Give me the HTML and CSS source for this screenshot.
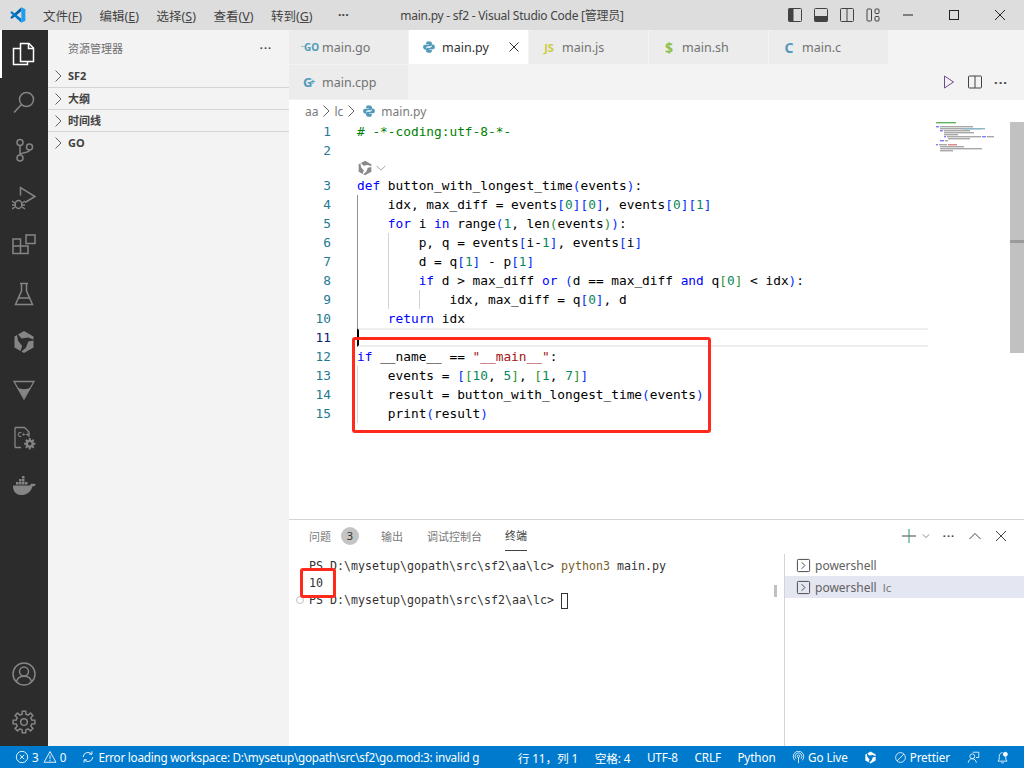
FILE: index.html
```html
<!DOCTYPE html>
<html lang="zh-CN">
<head>
    <meta charset="UTF-8">
    <meta name="viewport" content="width=device-width, initial-scale=1.0">
    <title>main.py - sf2 - Visual Studio Code</title>
    <link rel="stylesheet" href="styles.css">
</head>
<body>
    <svg class="defs" aria-hidden="true">
        <symbol id="py" viewBox="0 0 16 16">
            <path id="py-half" d="M8 1.3c-3 0-3.2 1-3.2 2.2v1.3H8v.6H3.5C2.2 5.4 1.3 6.4 1.3 8.1s.9 2.9 2.2 2.9h1.2V9.3c0-1.2 1-2.2 2.2-2.2h2.9c1 0 1.5-.8 1.5-1.8V3.5c0-1.2-1-2.2-4.3-2.2z"/>
            <use href="#py-half" transform="rotate(180 8 8)"/>
        </symbol>
        <symbol id="knot" viewBox="0 0 24 24">
            <path id="blade" d="M6 4.500L12 1 21.500 6.500V9.500L16 7.500 9.500 8.500z"/>
            <use href="#blade" transform="rotate(120 12 12)"/>
            <use href="#blade" transform="rotate(240 12 12)"/>
        </symbol>
        <symbol id="gear" viewBox="-12 -12 24 24">
            <polygon points="10.86,1.72 7.76,1.94 6.86,4.12 8.9,6.47 6.47,8.9 4.12,6.86 1.94,7.76 1.72,10.86 -1.72,10.86 -1.94,7.76 -4.12,6.86 -6.47,8.9 -8.9,6.47 -6.86,4.12 -7.76,1.94 -10.86,1.72 -10.86,-1.72 -7.76,-1.94 -6.86,-4.12 -8.9,-6.47 -6.47,-8.9 -4.12,-6.86 -1.94,-7.76 -1.72,-10.86 1.72,-10.86 1.94,-7.76 4.12,-6.86 6.47,-8.9 8.9,-6.47 6.86,-4.12 7.76,-1.94 10.86,-1.72"/>
        </symbol>
    </svg>

    <header class="titlebar">
        <div class="title-left">
            <svg class="logo" viewBox="0 0 100 100">
                <polygon fill="#0065a9" points="71,2 71,27 12,74 4,70 4,63"/>
                <polygon fill="#007acc" points="4,37 4,30 12,26 71,73 71,98"/>
                <polygon fill="#1f9cf0" points="71,2 96,14 96,86 71,98"/>
            </svg>
            <nav class="menu">
                <span>文件(<u>F</u>)</span>
                <span>编辑(<u>E</u>)</span>
                <span>选择(<u>S</u>)</span>
                <span>查看(<u>V</u>)</span>
                <span>转到(<u>G</u>)</span>
                <span class="menu-more">···</span>
            </nav>
        </div>
        <div class="title-text">main.py - sf2 - Visual Studio Code [管理员]</div>
        <div class="title-right">
            <div class="layout-btns">
                <svg viewBox="0 0 16 16"><rect x="1.500" y="1.500" width="13" height="13" rx="1" class="ln"/><rect x="1.500" y="1.500" width="5" height="13" class="fl"/></svg>
                <svg viewBox="0 0 16 16"><rect x="1.500" y="1.500" width="13" height="13" rx="1" class="ln"/><rect x="1.500" y="9" width="13" height="5.500" class="fl"/></svg>
                <svg viewBox="0 0 16 16"><rect x="1.500" y="1.500" width="13" height="13" rx="1" class="ln"/><path d="M8 1.500v13" class="ln"/></svg>
                <svg viewBox="0 0 16 16"><rect x="2" y="2" width="4.500" height="12" rx="1" class="ln"/><rect x="10" y="2" width="4" height="4.500" rx="1" class="ln"/><rect x="10" y="9.500" width="4" height="4.500" rx="1" class="ln"/></svg>
            </div>
            <div class="win-btn"><svg viewBox="0 0 10 10"><path d="M0 5h10" class="ln"/></svg></div>
            <div class="win-btn"><svg viewBox="0 0 10 10"><rect x=".5" y=".5" width="9" height="9" class="ln"/></svg></div>
            <div class="win-btn"><svg viewBox="0 0 10 10"><path d="M0 0l10 10M10 0L0 10" class="ln"/></svg></div>
        </div>
    </header>

    <div class="workbench">
        <aside class="activitybar">
            <div class="act active">
                <svg viewBox="0 0 24 24" class="st"><path d="M8.500 1.500h8.500l4.500 4.500v13.500h-13z"/><path d="M16.500 1.500v5h5"/><path d="M8.500 6.500H1.500v16h14v-3"/></svg>
            </div>
            <div class="act">
                <svg viewBox="0 0 24 24" class="st"><circle cx="14.500" cy="9.500" r="7"/><path d="M9.500 14.500L2 22.500"/></svg>
            </div>
            <div class="act">
                <svg viewBox="0 0 24 24" class="st"><circle cx="8" cy="4.500" r="3"/><circle cx="17.500" cy="9" r="3"/><circle cx="8" cy="20" r="3"/><path d="M8 7.500V17M17.500 12c0 3.500-9.500 2-9.500 5"/></svg>
            </div>
            <div class="act">
                <svg viewBox="0 0 24 24" class="st"><path d="M8.500 9.500V1.500L23 10.500 13 16.500"/><ellipse cx="6.500" cy="18.500" rx="3.300" ry="4"/><path d="M0 15l3 2M0 19h3M0 23l3-2M13 15l-3 2M13 19h-3M13 23l-3-2"/></svg>
            </div>
            <div class="act">
                <svg viewBox="0 0 24 24" class="st"><path d="M1 5h7.500v7h7.500v7.500H1zM1 12h7.500v7.500"/><rect x="14" y="1" width="9" height="8.500"/></svg>
            </div>
            <div class="act">
                <svg viewBox="0 0 24 24" class="st"><path d="M8 1.500h8M9.500 1.500v7.500L3.500 22.500h17L14.500 9V1.500M6.500 16h11"/></svg>
            </div>
            <div class="act">
                <svg viewBox="0 0 24 24" class="sym"><use href="#knot"/></svg>
            </div>
            <div class="act">
                <svg viewBox="0 0 24 24"><path d="M2 3.500h20L12 21z" class="st-thin"/><path d="M5.500 10c4 1.500 9 1.500 13 0L12 20z" class="fl-gray"/></svg>
            </div>
            <div class="act">
                <svg viewBox="0 0 24 24"><path d="M3 1.500h9.500l4.500 4.500v5M9 21.500H3z" class="st-thin"/><path d="M3 1.500v20" class="st-thin"/><text x="5.500" y="11" class="cpp">C++</text><use href="#gear" x="11.500" y="11.500" width="12.500" height="12.500" class="fl-gray"/><circle cx="17.750" cy="17.750" r="1.800" class="hole"/></svg>
            </div>
            <div class="act">
                <svg viewBox="0 0 24 24" class="sym"><path d="M1 11.500h17c.500-1.500 2-2.500 2.500-1.500.800-.600 2.500-.300 3.500.500-.800 1.500-2.300 1.800-3.500 1.700C19 18 15 21 9 21 3.500 21 .8 16.500 1 11.500z"/><path d="M4 8h2.500v2.500H4zM7 8h2.500v2.500H7zM10 8h2.500v2.500H10zM13 8h2.500v2.500H13zM7 5h2.500v2.500H7zM10 5h2.500v2.500H10zM10 2h2.500v2.500H10z"/></svg>
            </div>
            <div class="act-spacer"></div>
            <div class="act">
                <svg viewBox="0 0 24 24" class="st"><circle cx="12" cy="12" r="11"/><circle cx="12" cy="9.500" r="4.500"/><path d="M4.500 20c.500-3.500 3.500-5.800 7.500-5.800s7 2.300 7.500 5.800"/></svg>
            </div>
            <div class="act">
                <svg viewBox="-12 -12 24 24" class="st"><use href="#gear" x="-12" y="-12" width="24" height="24"/><circle r="3.300"/></svg>
            </div>
        </aside>

        <aside class="sidebar">
            <div class="side-head"><span>资源管理器</span><span class="dots">···</span></div>
            <div class="side-sec"><svg viewBox="0 0 16 16" class="chev"><path d="M5.500 2.500L11 8l-5.500 5.500"/></svg>SF2</div>
            <div class="side-sec line"><svg viewBox="0 0 16 16" class="chev"><path d="M5.500 2.500L11 8l-5.500 5.500"/></svg>大纲</div>
            <div class="side-sec line"><svg viewBox="0 0 16 16" class="chev"><path d="M5.500 2.500L11 8l-5.500 5.500"/></svg>时间线</div>
            <div class="side-sec line"><svg viewBox="0 0 16 16" class="chev"><path d="M5.500 2.500L11 8l-5.500 5.500"/></svg>GO</div>
        </aside>

        <main class="main">
            <div class="tabs">
                <div class="tab"><span class="fi go">GO</span>main.go</div>
                <div class="tab on"><span class="fi"><svg class="py"><use href="#py"/></svg></span>main.py<svg viewBox="0 0 16 16" class="tab-x"><path d="M3.500 3.500l9 9M12.500 3.500l-9 9"/></svg></div>
                <div class="tab"><span class="fi js">JS</span>main.js</div>
                <div class="tab"><span class="fi sh">$</span>main.sh</div>
                <div class="tab"><span class="fi cc">C</span>main.c</div>
            </div>
            <div class="tabs second">
                <div class="tab"><span class="fi cc cpp-ic">G<sup>+</sup></span>main.cpp</div>
                <div class="tab-actions">
                    <svg viewBox="0 0 16 16"><path d="M3.500 2L12.500 8l-9 6z" class="run"/></svg>
                    <svg viewBox="0 0 16 16"><rect x="1.500" y="2" width="13" height="12" rx="1" class="ln"/><path d="M8 2v12" class="ln"/></svg>
                    <span class="dots">···</span>
                </div>
            </div>
            <div class="crumbs">
                <span>aa</span><svg viewBox="0 0 16 16" class="chev"><path d="M5.500 2.500L11 8l-5.500 5.500"/></svg>
                <span>lc</span><svg viewBox="0 0 16 16" class="chev"><path d="M5.500 2.500L11 8l-5.500 5.500"/></svg>
                <svg class="py"><use href="#py"/></svg><span>main.py</span>
            </div>

            <section class="editor">
                <div class="gutter">
                    <div>1</div><div>2</div><div class="lens-gap"></div><div>3</div><div>4</div><div>5</div><div>6</div><div>7</div><div>8</div><div>9</div><div>10</div><div class="cur">11</div><div>12</div><div>13</div><div>14</div><div>15</div>
                </div>
                <div class="code">
<div class="l"><span class="c"># -*-coding:utf-8-*-</span></div>
<div class="l"></div>
<div class="lens"><svg viewBox="0 0 24 24" class="lens-ic"><use href="#knot"/></svg><svg viewBox="0 0 16 16" class="lens-ch"><path d="M3 5.500l5 5 5-5"/></svg></div>
<div class="l"><span class="k">def</span> button_with_longest_time<span class="b1">(</span>events<span class="b1">)</span>:</div>
<div class="l"><i class="g a"></i>idx, max_diff = events<span class="b1">[</span><span class="n">0</span><span class="b1">][</span><span class="n">0</span><span class="b1">]</span>, events<span class="b1">[</span><span class="n">0</span><span class="b1">][</span><span class="n">1</span><span class="b1">]</span></div>
<div class="l"><i class="g a"></i><span class="k">for</span> i <span class="k">in</span> range<span class="b1">(</span><span class="n">1</span>, len<span class="b2">(</span>events<span class="b2">)</span><span class="b1">)</span>:</div>
<div class="l"><i class="g a"></i><i class="g"></i>p, q = events<span class="b1">[</span>i-<span class="n">1</span><span class="b1">]</span>, events<span class="b1">[</span>i<span class="b1">]</span></div>
<div class="l"><i class="g a"></i><i class="g"></i>d = q<span class="b1">[</span><span class="n">1</span><span class="b1">]</span> - p<span class="b1">[</span><span class="n">1</span><span class="b1">]</span></div>
<div class="l"><i class="g a"></i><i class="g"></i><span class="k">if</span> d &gt; max_diff <span class="k">or</span> <span class="b1">(</span>d == max_diff <span class="k">and</span> q<span class="b2">[</span><span class="n">0</span><span class="b2">]</span> &lt; idx<span class="b1">)</span>:</div>
<div class="l"><i class="g a"></i><i class="g"></i><i class="g"></i>idx, max_diff = q<span class="b1">[</span><span class="n">0</span><span class="b1">]</span>, d</div>
<div class="l"><i class="g a"></i><span class="k">return</span> idx</div>
<div class="l curline"></div>
<div class="l"><span class="k">if</span> __name__ == <span class="s">"__main__"</span>:</div>
<div class="l"><i class="g"></i>events = <span class="b1">[</span><span class="b2">[</span><span class="n">10</span>, <span class="n">5</span><span class="b2">]</span>, <span class="b2">[</span><span class="n">1</span>, <span class="n">7</span><span class="b2">]</span><span class="b1">]</span></div>
<div class="l"><i class="g"></i>result = button_with_longest_time<span class="b1">(</span>events<span class="b1">)</span></div>
<div class="l"><i class="g"></i>print<span class="b1">(</span>result<span class="b1">)</span></div>
                </div>
                <svg class="minimap" viewBox="0 0 74 34">
                    <rect x="0" y="0" width="20" height="1.400" fill="#5fb55f"/>
                    <rect x="0" y="4" width="3" height="1.400" fill="#7d7dff"/><rect x="4" y="4" width="33" height="1.400" fill="#a8a8a8"/>
                    <rect x="4" y="6" width="42" height="1.400" fill="#a8a8a8"/><rect x="27" y="6" width="22" height="1.400" fill="#8fb8c8"/>
                    <rect x="4" y="8" width="3" height="1.400" fill="#7d7dff"/><rect x="8" y="8" width="26" height="1.400" fill="#a8a8a8"/>
                    <rect x="8" y="10" width="30" height="1.400" fill="#a8a8a8"/>
                    <rect x="8" y="12" width="14" height="1.400" fill="#a8a8a8"/>
                    <rect x="8" y="14" width="2" height="1.400" fill="#7d7dff"/><rect x="11" y="14" width="34" height="1.400" fill="#a8a8a8"/><rect x="46" y="14" width="4" height="1.400" fill="#7d7dff"/><rect x="51" y="14" width="7" height="1.400" fill="#a8a8a8"/>
                    <rect x="12" y="16" width="22" height="1.400" fill="#a8a8a8"/>
                    <rect x="4" y="18" width="4" height="1.400" fill="#7d7dff"/><rect x="9" y="18" width="3" height="1.400" fill="#a8a8a8"/>
                    <rect x="0" y="22" width="2" height="1.400" fill="#7d7dff"/><rect x="3" y="22" width="8" height="1.400" fill="#a8a8a8"/><rect x="12" y="22" width="9" height="1.400" fill="#d98a8a"/>
                    <rect x="4" y="24" width="24" height="1.400" fill="#a8a8a8"/>
                    <rect x="4" y="26" width="42" height="1.400" fill="#a8a8a8"/>
                    <rect x="4" y="28" width="13" height="1.400" fill="#a8a8a8"/>
                </svg>
                <div class="vscroll"><div class="slider"></div></div>
            </section>

            <section class="panel">
                <div class="panel-tabs">
                    <span class="ptab">问题<b class="badge">3</b></span>
                    <span class="ptab">输出</span>
                    <span class="ptab">调试控制台</span>
                    <span class="ptab on">终端</span>
                    <div class="panel-actions">
                        <svg viewBox="0 0 16 16"><path d="M1 8h14" class="ln"/><path d="M8 1v14" class="plus"/></svg>
                        <svg viewBox="0 0 16 16" class="small"><path d="M3 5.500l5 5 5-5" class="ln"/></svg>
                        <span class="dots">···</span>
                        <svg viewBox="0 0 16 16"><path d="M2.500 11L8 5.500l5.500 5.500" class="ln"/></svg>
                        <svg viewBox="0 0 16 16"><path d="M3 3l10 10M13 3L3 13" class="ln"/></svg>
                    </div>
                </div>
                <div class="panel-body">
                    <div class="terminal">
                        <div class="t-line">PS D:\mysetup\gopath\src\sf2\aa\lc&gt; <span class="cmd">python3</span> main.py</div>
                        <div class="t-line">10</div>
                        <div class="t-line">PS D:\mysetup\gopath\src\sf2\aa\lc&gt; <i class="t-cursor"></i></div>
                        <i class="t-deco"></i>
                        <i class="t-mark"></i>
                    </div>
                    <div class="term-list">
                        <div class="term-row"><svg viewBox="0 0 16 16"><rect x="1.500" y="1.500" width="13" height="13" rx="1" class="ln"/><path d="M6 4.500L9.500 8 6 11.500" class="ln"/></svg>powershell</div>
                        <div class="term-row on"><svg viewBox="0 0 16 16"><rect x="1.500" y="1.500" width="13" height="13" rx="1" class="ln"/><path d="M6 4.500L9.500 8 6 11.500" class="ln"/></svg>powershell<span class="term-sub">lc</span></div>
                    </div>
                </div>
            </section>
        </main>
    </div>

    <footer class="statusbar">
        <div class="st-left">
            <span class="si">
                <svg viewBox="0 0 16 16"><circle cx="8" cy="8" r="6.500"/><path d="M5.500 5.500l5 5M10.500 5.500l-5 5"/></svg>3
                <svg viewBox="0 0 16 16" class="warn"><path d="M8 1.800L14.800 14H1.200zM8 6v4.500M8 11.500v1.500"/></svg>0
            </span>
            <span class="si msg">
                <svg viewBox="0 0 16 16"><path d="M2.500 8a5.500 5.500 0 0 1 9.500-3.500M13.500 8A5.500 5.500 0 0 1 4 11.500M12.500 1.500v3.300H9.200M3.500 14.500v-3.300h3.300"/></svg>Error loading workspace: D:\mysetup\gopath\src\sf2\go.mod:3: invalid g
            </span>
        </div>
        <div class="st-right">
            <span class="si">行 11，列 1</span>
            <span class="si">空格: 4</span>
            <span class="si">UTF-8</span>
            <span class="si">CRLF</span>
            <span class="si">Python</span>
            <span class="si"><svg viewBox="0 0 16 16"><circle cx="8" cy="6.500" r="1.500"/><path d="M5 9.500a4.200 4.200 0 1 1 6 0M3.500 11.500a6.500 6.500 0 1 1 9 0M8 8v7"/></svg>Go Live</span>
            <span class="si"><svg viewBox="0 0 24 24" class="fillw"><use href="#knot"/></svg></span>
            <span class="si"><svg viewBox="0 0 16 16"><circle cx="8" cy="8" r="6"/><path d="M3.800 12.200l8.400-8.400"/></svg>Prettier</span>
            <span class="si"><svg viewBox="0 0 16 16"><circle cx="6.500" cy="6.500" r="3"/><path d="M1.500 14.500c.3-3 2.300-5 5-5s4.700 2 5 5M7 1.500h7.500v6.500H11"/></svg></span>
            <span class="si"><svg viewBox="0 0 16 16"><path d="M8 2C5.500 2 4 4 4 6.500V10l-1.500 2.500h11L12 10V6.500M6.500 14.500h3"/><circle cx="11.500" cy="4" r="2.500" class="dot"/></svg></span>
        </div>
    </footer>

    <!-- red annotation boxes on top of the screenshot -->
    <div class="mark mark-code"></div>
    <div class="mark mark-term"></div>
</body>
</html>
```
FILE: styles.css
```css
* {
    box-sizing: border-box;
}
html, body {
    height: 100%;
}
body {
    margin: 0;
    height: 768px;
    width: 1024px;
    overflow: hidden;
    position: relative;
    display: flex;
    flex-direction: column;
    font-family: "Noto Sans", "Noto Sans CJK SC", sans-serif;
    font-size: 13px;
    color: #333;
    background: #fff;
}
svg {
    display: block;
    flex: none;
}
.defs {
    position: absolute;
    width: 0;
    height: 0;
}
.ln {
    fill: none;
    stroke: #424242;
    stroke-width: 1;
}
.fl {
    fill: #424242;
}
.dots {
    width: 16px;
    text-align: center;
    letter-spacing: 1px;
    font-weight: 700;
    color: #424242;
}

/* title bar */
.titlebar {
    height: 30px;
    flex: none;
    background: #ddd;
    display: grid;
    grid-template-columns: 1fr auto 1fr;
    align-items: center;
    font-size: 12px;
}
.title-left {
    display: flex;
    align-items: center;
}
.logo {
    width: 16px;
    height: 16px;
    margin-left: 10px;
}
.menu {
    display: flex;
    gap: 17.5px;
    margin-left: 17px;
    font-size: 12.5px;
    color: #444;
}
.menu u {
    text-underline-offset: 1px;
}
.menu-more {
    margin-left: 8px;
    font-weight: 700;
}
.title-text {
    color: #444;
    letter-spacing: -0.25px;
}
.title-right {
    display: flex;
    justify-content: flex-end;
    align-items: center;
    height: 30px;
    padding-right: 1px;
}
.layout-btns {
    display: flex;
    gap: 10px;
    margin-right: 4px;
}
.layout-btns svg {
    width: 16px;
    height: 16px;
}
.win-btn {
    width: 46px;
    height: 30px;
    display: flex;
    align-items: center;
    justify-content: center;
}
.win-btn svg {
    width: 10px;
    height: 10px;
}
.win-btn .ln {
    stroke: #222;
}

.workbench {
    flex: 1;
    display: flex;
    min-height: 0;
}

/* activity bar */
.activitybar {
    width: 48px;
    flex: none;
    background: #2c2c2c;
    display: flex;
    flex-direction: column;
}
.act {
    height: 48px;
    flex: none;
    display: flex;
    align-items: center;
    justify-content: center;
    color: #858585;
}
.act svg {
    width: 24px;
    height: 24px;
}
.act.active {
    color: #fff;
    border-left: 2px solid #fff;
    padding-right: 2px;
}
.act-spacer {
    flex: 1;
}
.st {
    fill: none;
    stroke: currentColor;
    stroke-width: 1.5;
}
.st-thin {
    fill: none;
    stroke: #858585;
    stroke-width: 1.3;
}
.fl-gray {
    fill: #858585;
}
.hole {
    fill: #2c2c2c;
}
.sym {
    fill: #858585;
}
.cpp {
    font-size: 6.5px;
    font-weight: 700;
    fill: #858585;
}

/* side bar */
.sidebar {
    width: 241px;
    flex: none;
    background: #f3f3f3;
}
.side-head {
    height: 35px;
    padding: 0 15px 0 20px;
    display: flex;
    align-items: center;
    justify-content: space-between;
    font-size: 11px;
    color: #6f6f6f;
}
.side-sec {
    height: 22px;
    display: flex;
    align-items: center;
    padding-left: 2px;
    padding-bottom: 1px;
    font-size: 11px;
    font-weight: 700;
    color: #424242;
}
.side-sec.line {
    border-top: 1px solid #d4d4d4;
}
.chev {
    width: 16px;
    height: 16px;
    fill: none;
    stroke: #616161;
    stroke-width: 1;
}
.side-sec .chev {
    margin: 1px 2px 0 0;
}

/* tabs */
.main {
    flex: 1;
    min-width: 0;
    display: flex;
    flex-direction: column;
}
.tabs {
    height: 34px;
    flex: none;
    display: flex;
    background: #f3f3f3;
}
.tabs.second {
    height: 36px;
    padding-top: 1px;
    padding-bottom: 1px;
}
.tab {
    width: 120px;
    display: flex;
    align-items: center;
    padding-left: 12px;
    background: #ececec;
    border-right: 1px solid #f3f3f3;
    color: #727272;
    font-size: 12.5px;
}
.tab.on {
    background: #fff;
    color: #333;
}
.fi {
    width: 16px;
    height: 16px;
    margin-right: 5px;
    display: flex;
    align-items: center;
    justify-content: center;
    font-weight: 700;
    font-size: 11px;
}
.go {
    color: #519aba;
    font-size: 10px;
    white-space: nowrap;
    padding-left: 5px;
    background: linear-gradient(#9cbfcf, #9cbfcf) -1px 7px / 6px 1px no-repeat;
}
.js {
    color: #cbcb41;
}
.sh {
    color: #8dc149;
    font-size: 14px;
}
.cc {
    color: #519aba;
    font-size: 14px;
}
.cpp-ic {
    font-size: 13px;
}
.cc sup {
    font-size: 8px;
    line-height: 0;
    margin-left: -2px;
}
.py {
    width: 14px;
    height: 14px;
    fill: #519aba;
}
.tab-x {
    width: 16px;
    height: 16px;
    margin-left: auto;
    margin-right: 6px;
    fill: none;
    stroke: #333;
}
.tab-actions {
    margin-left: auto;
    display: flex;
    align-items: center;
    gap: 10px;
    padding-right: 15px;
}
.tab-actions svg {
    width: 16px;
    height: 16px;
}
.run {
    fill: none;
    stroke: #6b4b8f;
}

/* breadcrumbs */
.crumbs {
    height: 22px;
    flex: none;
    display: flex;
    align-items: center;
    padding-left: 16px;
    font-size: 12px;
    color: #7a7a7a;
}
.crumbs .py {
    margin: 0 5px 0 3px;
}

/* editor */
.editor {
    flex: 1;
    min-height: 0;
    display: flex;
    font-family: "DejaVu Sans Mono", monospace;
    font-size: 12.8px;
    color: #000;
}
.gutter {
    width: 68px;
    flex: none;
    padding-right: 26px;
    text-align: right;
    color: #237893;
}
.gutter div {
    height: 19px;
    line-height: 19px;
}
.gutter .lens-gap {
    height: 16px;
}
.gutter .cur {
    color: #0b216f;
}
.code {
    width: 571px;
    flex: none;
}
.l {
    height: 19px;
    line-height: 19px;
    white-space: pre;
}
.lens {
    height: 16px;
    display: flex;
    align-items: center;
    gap: 1px;
}
.lens-ic {
    width: 16px;
    height: 16px;
    fill: #8a8a8a;
}
.lens-ch {
    width: 14px;
    height: 14px;
    fill: none;
    stroke: #999;
}
.curline {
    border-top: 2px solid #eee;
    border-bottom: 2px solid #eee;
    border-left: 2px solid #000;
}
.g {
    display: inline-block;
    vertical-align: top;
    width: 30.82px;
    height: 19px;
    border-left: 1px solid #d3d3d3;
}
.g.a {
    border-left-color: #939393;
}
.k { color: #0000ff; }
.s { color: #a31515; }
.n { color: #098658; }
.c { color: #008000; }
.b1 { color: #0431fa; }
.b2 { color: #319331; }
.minimap {
    width: 74px;
    height: 34px;
    margin-left: 8px;
}
.vscroll {
    width: 14px;
    flex: none;
    margin-left: auto;
}
.slider {
    height: 231px;
    background: linear-gradient(#c1c1c1 118px, #9a9a9a 118px, #9a9a9a 121px, #c1c1c1 121px);
}

/* panel */
.panel {
    height: 227px;
    flex: none;
    border-top: 1px solid #d4d4d4;
    display: flex;
    flex-direction: column;
}
.panel-tabs {
    height: 34px;
    flex: none;
    display: flex;
    align-items: flex-start;
    padding-left: 20px;
    gap: 24px;
    font-size: 11px;
    color: #7a7a7a;
}
.ptab {
    display: flex;
    align-items: center;
    height: 31px;
}
.ptab.on {
    color: #424242;
    border-bottom: 1px solid #424242;
    margin-left: -1px;
}
.badge {
    width: 18px;
    height: 18px;
    margin: 0 -2px 0 10px;
    border-radius: 50%;
    background: #c4c4c4;
    color: #333;
    font-weight: 400;
    display: flex;
    align-items: center;
    justify-content: center;
}
.panel-actions {
    margin-left: auto;
    display: flex;
    align-items: center;
    gap: 10px;
    height: 31px;
    padding-right: 15px;
}
.panel-actions svg {
    width: 16px;
    height: 16px;
}
.panel-actions svg.small {
    width: 10px;
    height: 10px;
    margin-left: -6px;
}
.plus {
    stroke: #2f8f6f;
    stroke-width: 1;
    fill: none;
}
.panel-body {
    flex: 1;
    display: flex;
    min-height: 0;
}
.terminal {
    flex: 1;
    position: relative;
    padding: 4px 0 0 20px;
    font-family: "DejaVu Sans Mono", monospace;
    font-size: 11.63px;
    color: #333;
}
.t-line {
    height: 17px;
    line-height: 17px;
    white-space: pre;
    display: flex;
    align-items: center;
}
.cmd {
    color: #795e26;
}
.t-cursor {
    width: 7px;
    height: 16px;
    border: 1px solid #333;
}
.t-deco {
    position: absolute;
    left: 7px;
    top: 42px;
    width: 8px;
    height: 8px;
    border: 1px solid #c0c0c0;
    border-radius: 50%;
}
.t-mark {
    position: absolute;
    right: 7px;
    top: 31px;
    width: 3px;
    height: 12px;
    background: #c0c0c0;
}
.term-list {
    width: 240px;
    flex: none;
    border-left: 1px solid #d4d4d4;
    color: #616161;
    font-size: 12px;
}
.term-row {
    height: 22px;
    display: flex;
    align-items: center;
    gap: 4px;
    padding-left: 11px;
}
.term-row svg {
    width: 15px;
    height: 15px;
}
.term-row.on {
    background: #e4e6f1;
}
.term-sub {
    margin-left: 2px;
    font-size: 11.5px;
    color: #777;
}

/* status bar */
.statusbar {
    height: 22px;
    flex: none;
    background: #007acc;
    color: #fff;
    font-size: 11.7px;
    display: flex;
    justify-content: space-between;
    align-items: center;
    white-space: nowrap;
}
.st-left, .st-right {
    display: flex;
    align-items: center;
}
.st-left {
    padding-left: 15px;
}
.st-right {
    padding-right: 15px;
    gap: 16.5px;
    letter-spacing: -0.1px;
}
.si {
    display: flex;
    align-items: center;
    gap: 3px;
}
.si svg {
    width: 14px;
    height: 14px;
    fill: none;
    stroke: #fff;
    stroke-width: 1;
}
.st-right .si svg {
    width: 13px;
    height: 13px;
}
.si .warn {
    margin-left: 1px;
}
.si .fillw {
    fill: #fff;
    stroke: none;
}
.si .dot {
    fill: #fff;
}
.msg {
    margin-left: 15px;
    letter-spacing: -0.24px;
}

/* annotations */
.mark {
    position: absolute;
    border: 3px solid #ff2a1c;
    border-radius: 3px;
}
.mark-code {
    left: 352px;
    top: 337px;
    width: 359px;
    height: 96px;
}
.mark-term {
    left: 300px;
    top: 568px;
    width: 36px;
    height: 30px;
}
```
